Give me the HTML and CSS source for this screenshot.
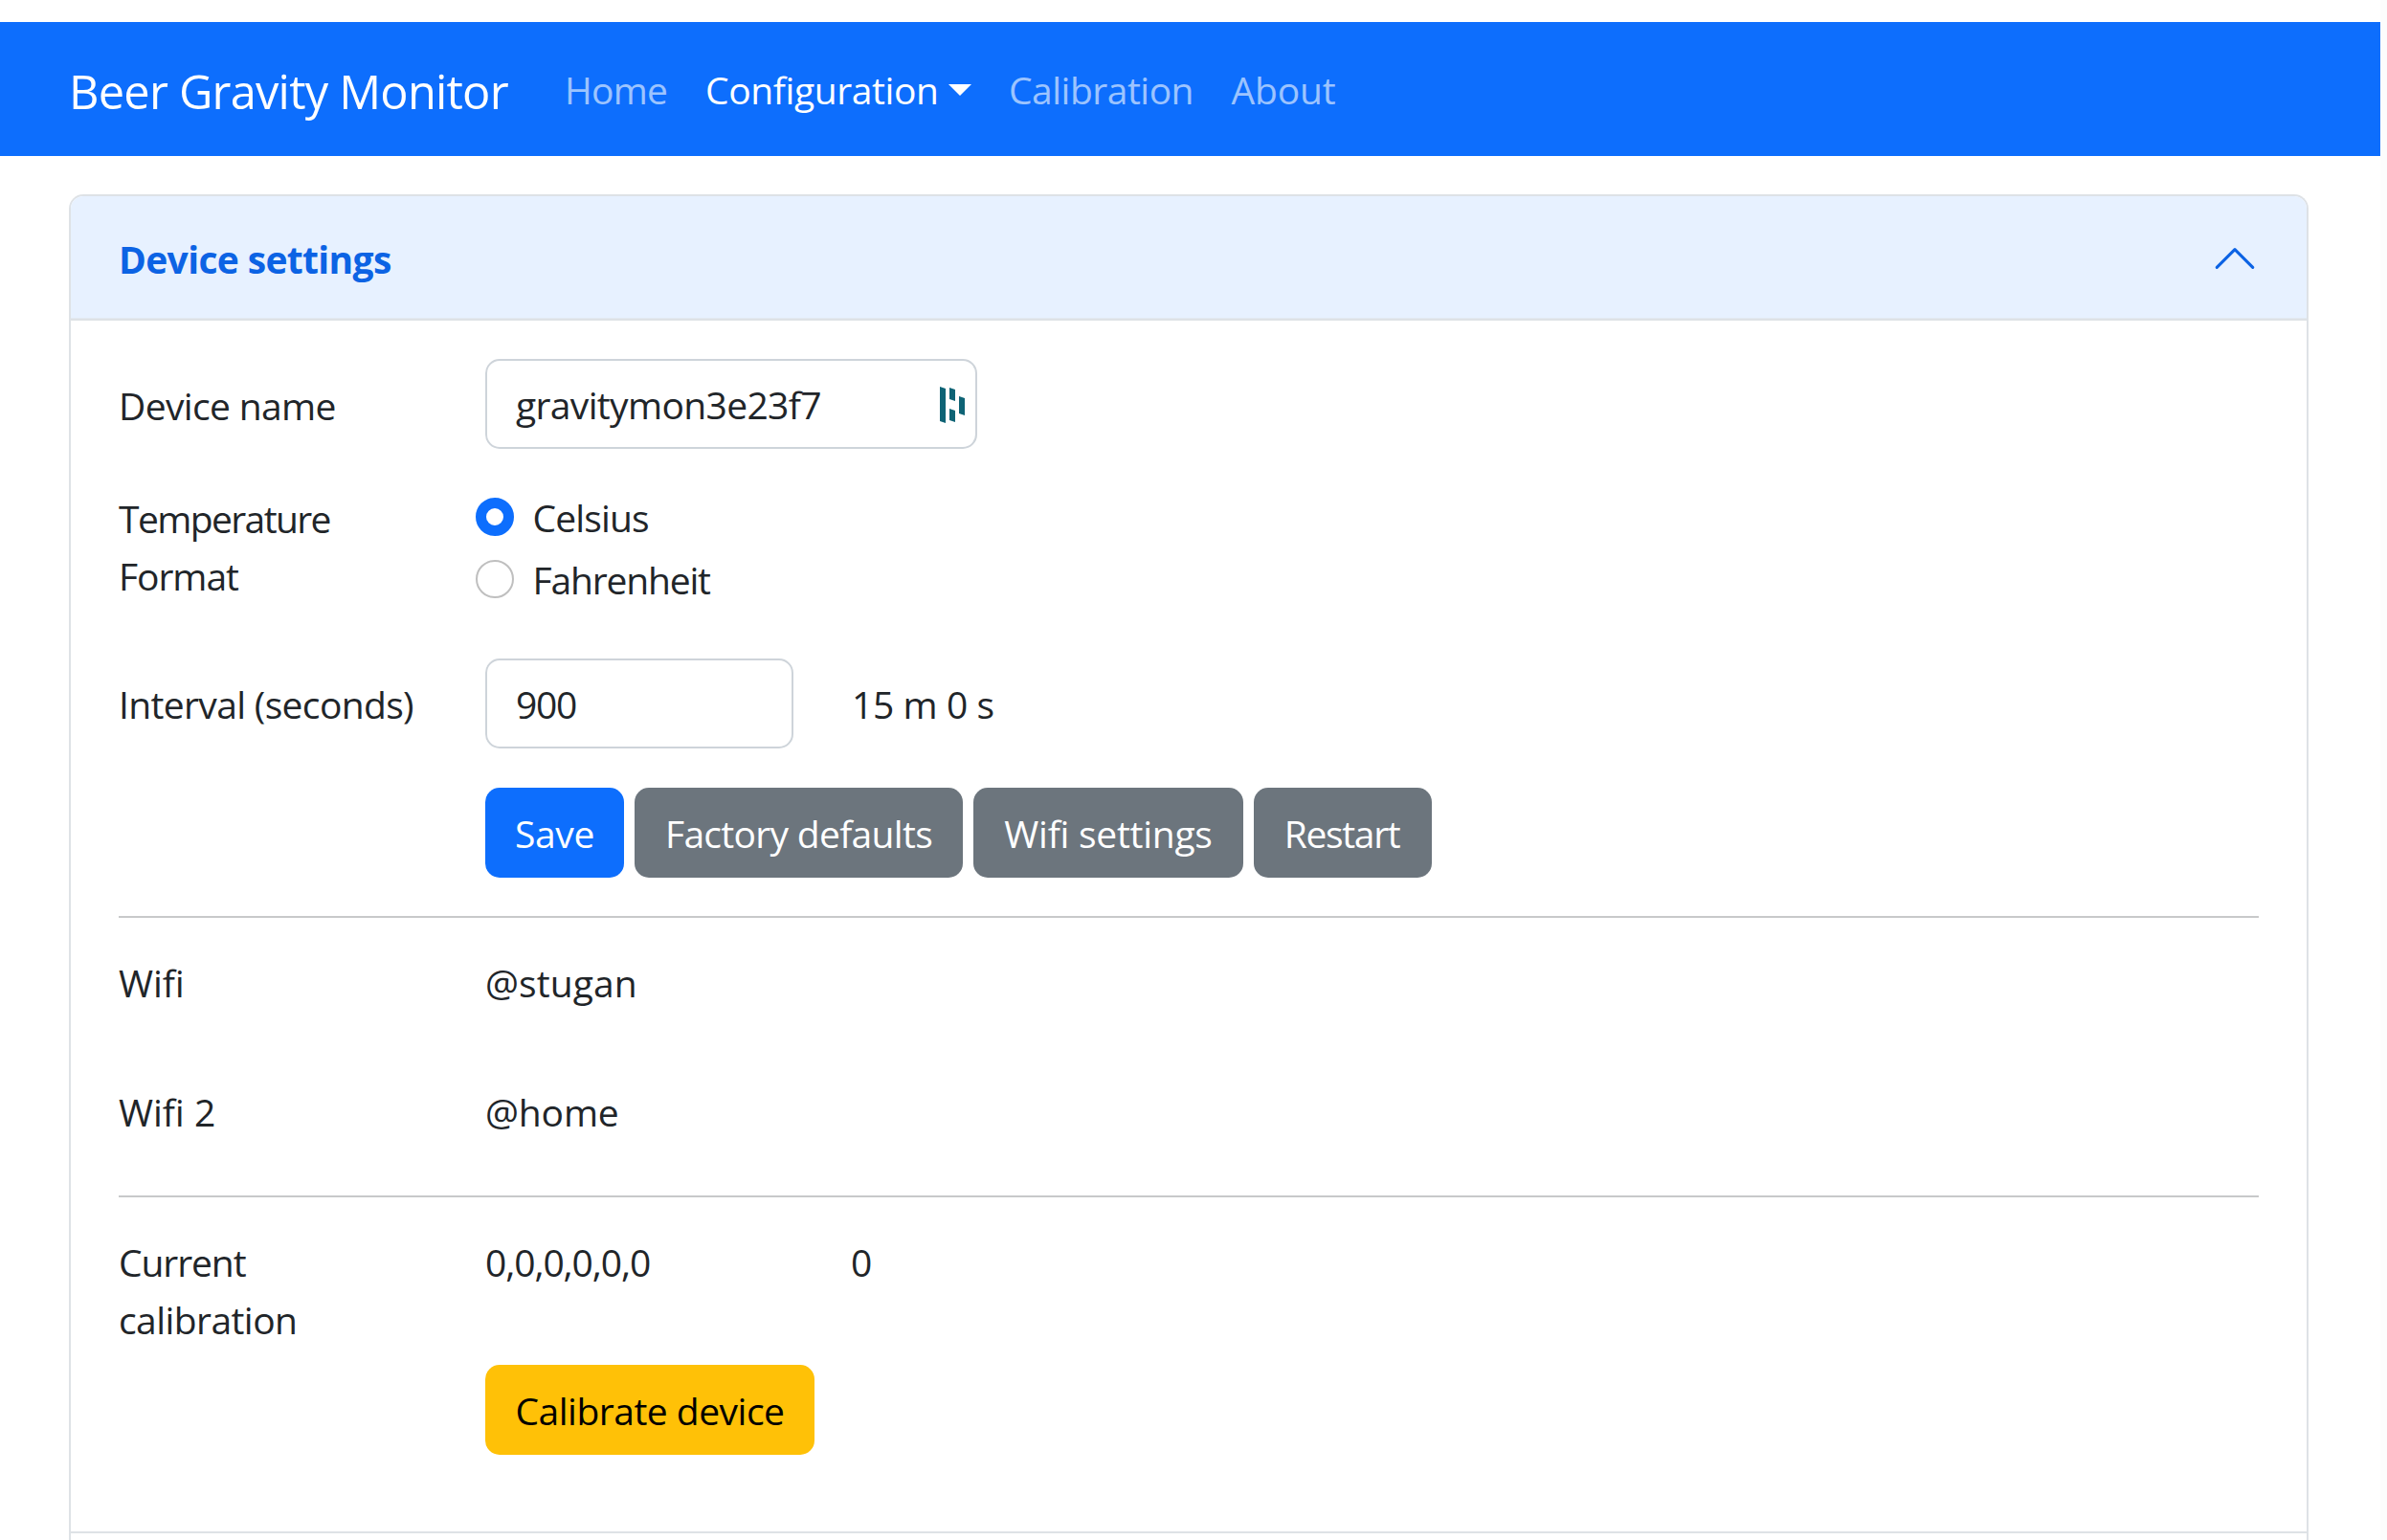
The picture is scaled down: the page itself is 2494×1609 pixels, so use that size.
FILE: index.html
```
<!DOCTYPE html>
<html lang="en">
<head>
<meta charset="utf-8">
<title>Beer Gravity Monitor</title>
<link rel="stylesheet" href="styles.css">
</head>
<body>
<div class="page">
  <nav class="navbar">
    <a class="brand">Beer Gravity Monitor</a>
    <a class="link home">Home</a>
    <a class="link active config">Configuration<svg class="caret" width="24" height="12" viewBox="0 0 24 12"><path d="M0 0H24L12 12Z" fill="#fff"/></svg></a>
    <a class="link calib">Calibration</a>
    <a class="link about">About</a>
  </nav>
  <main class="accordion">
    <header class="accordion-header">
      <span>Device settings</span>
      <svg width="50" height="50" viewBox="0 0 16 16" fill="none" stroke="#0c63e4" stroke-linecap="round" stroke-linejoin="round"><path d="m2 11 6-6 6 6"/></svg>
    </header>
    <section class="accordion-body">
      <div class="row row-name">
        <label class="label first">Device name</label>
        <div class="input wide"><span>gravitymon3e23f7</span>
          <svg class="manager" width="28" height="40" viewBox="0 0 28 40" fill="#0e6375"><path d="M1 1l6 2v36l-6-2zM11 2l6 2v12l-6-2zM11 24l6 2v12l-6-2zM21 11l6 2v18l-6-2z"/></svg>
        </div>
      </div>
      <div class="row row-format">
        <label class="label"><span class="temperature">Temperature</span><br><span class="format">Format</span></label>
        <div class="radios">
          <label class="radio"><i class="dot checked"></i><span class="celsius">Celsius</span></label>
          <label class="radio"><i class="dot"></i><span class="fahrenheit">Fahrenheit</span></label>
        </div>
      </div>
      <div class="row row-interval">
        <label class="label">Interval (seconds)</label>
        <div class="input number"><span>900</span></div>
        <span class="label duration">15 m 0 s</span>
      </div>
      <div class="row row-actions">
        <div class="buttons">
          <button class="btn primary save">Save</button>
          <button class="btn secondary factory">Factory defaults</button>
          <button class="btn secondary wifi-btn">Wifi settings</button>
          <button class="btn secondary restart">Restart</button>
        </div>
      </div>
      <hr>
      <div class="row text-row row-wifi"><span class="wifi">Wifi</span><span class="network stugan">@stugan</span></div>
      <div class="row text-row row-wifi2"><span class="wifi">Wifi 2</span><span class="network home-net">@home</span></div>
      <hr>
      <div class="row text-row row-current">
        <span><span class="current">Current</span><br><span class="calibration">calibration</span></span>
        <span class="formula">0,0,0,0,0,0</span><span class="zero">0</span>
      </div>
      <div class="row row-calibrate">
        <div class="buttons"><button class="btn warning">Calibrate device</button></div>
      </div>
    </section>
  </main>
</div>
</body>
</html>
```
FILE: styles.css
```
* { box-sizing: border-box; }
html { background: #fcfcfc; overflow: hidden; }
body {
  margin: 0;
  height: 1609px;
  overflow: hidden;
  font: 39px/60px "Open Sans", "Noto Sans", sans-serif;
  letter-spacing: -0.65px;
  color: #212529;
}
.page { width: 2487px; height: 1609px; padding-top: 23px; background: #fff; overflow: hidden; }

/* Navigation */
.navbar { display: flex; align-items: center; height: 140px; padding-left: 72px; background: #0d6efd; color: #fff; white-space: nowrap; }
.brand { width: 518px; padding-top: 4px; font-size: 48.75px; letter-spacing: -0.78px; }
.link { padding-top: 1px; color: rgba(255, 255, 255, .6); }
.link.active { display: flex; color: #fff; }
.home { width: 147px; letter-spacing: -0.77px; }
.config { width: 317px; letter-spacing: -0.4px; }
.caret { margin: 24px 0 0 10px; }
.calib { width: 232.5px; letter-spacing: -0.5px; }
.about { letter-spacing: -0.15px; }

/* Accordion */
.accordion { width: 2340px; height: 1440px; margin: 40px 0 0 72px; border: 2px solid #dee2e6; border-bottom: 0; border-radius: 15px 15px 0 0; overflow: hidden; }
.accordion-header {
  display: flex; align-items: center; justify-content: space-between;
  height: 130px; padding: 0 50px;
  background: #e7f1ff; color: #0c63e4;
  font-weight: 700; letter-spacing: -0.65px;
  box-shadow: inset 0 -2.5px 0 #dee2e6;
}
.accordion-header span { padding-top: 1px; }
.accordion-body { height: 1267px; padding: 40px 50px 0; border-bottom: 2px solid #dee2e6; }
hr { height: 2px; margin: 0; border: 0; background: #c8c9ca; }

/* Form rows */
.row { display: grid; grid-template-columns: 383px 383px 1fr; align-items: start; }
.row-name { height: 119px; }
.row-format { height: 194px; }
.row-interval { height: 135px; }
.row-actions { height: 134px; }
.row-wifi { height: 135px; }
.row-wifi2 { height: 155px; }
.row-current { height: 175px; }
.row-calibrate { height: 174px; }
.text-row { padding-top: 38px; }
.label { padding-top: 17.5px; }
.label.first { padding-top: 18.5px; }

.input {
  display: flex; align-items: center; justify-content: space-between;
  height: 94px; padding: 2px 10px 0 30px;
  border: 2px solid #ced4da; border-radius: 15px;
}
.wide { width: 514px; }
.wide span { letter-spacing: -0.65px; }
.number { width: 322px; letter-spacing: -1.3px; }
.manager { margin-top: -1px; }
.duration { letter-spacing: -0.4px; }

.radios { margin: 17px 0 0 -10px; }
.radio { display: flex; height: 65px; gap: 19.5px; }
.dot { width: 40px; height: 40px; margin-top: 9px; border: 2px solid #bfbfbf; border-radius: 50%; }
.dot.checked { border: 11px solid #0d6efd; }

/* Buttons */
.buttons { grid-column: 2 / 4; display: flex; gap: 11px; }
.btn {
  height: 94px; padding: 2px 0 0; border: 0; border-radius: 15px;
  font: inherit; color: #fff;
}
.primary { background: #0d6efd; }
.secondary { background: #6c757d; }
.save { width: 145px; letter-spacing: -0.3px; }
.factory { width: 343px; letter-spacing: -0.7px; }
.wifi-btn { width: 282px; letter-spacing: -0.27px; }
.restart { width: 186px; padding-right: 2px; letter-spacing: -1.34px; }
.warning { width: 344px; background: #ffc107; color: #000; letter-spacing: -0.5px; }

/* Tracking per text */
.temperature { letter-spacing: -1.6px; }
.format { letter-spacing: -1.06px; }
.celsius { letter-spacing: -0.85px; }
.fahrenheit { letter-spacing: -1.17px; }
.wifi { letter-spacing: 0; }
.stugan { letter-spacing: 0.08px; }
.home-net { letter-spacing: -0.15px; }
.current { letter-spacing: -1.08px; }
.calibration { letter-spacing: -0.57px; }
.formula { letter-spacing: -1.1px; }
.zero { margin-left: -1px; }
```
